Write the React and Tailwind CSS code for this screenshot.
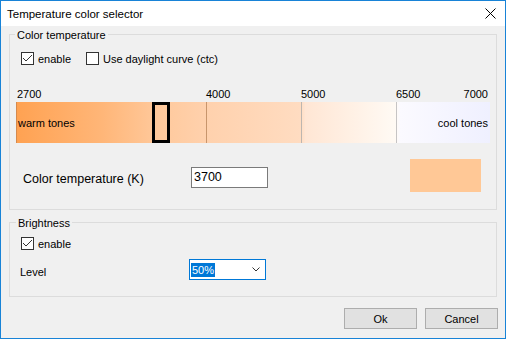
import React from 'react';

// tick labels above the scale, px from the left edge of the bar
const ticks = [
  { label: '2700', left: 1 },
  { label: '4000', left: 190 },
  { label: '5000', left: 285 },
  { label: '6500', left: 380 },
];

// separator lines inside the bar
const dividers = [
  { left: 189, color: 'bg-[#c8956c]' },
  { left: 284, color: 'bg-[#bdb6b0]' },
  { left: 379, color: 'bg-[#c6c4c4]' },
];

const Checkbox = ({ checked }) => (
  <span className="flex h-[13px] w-[13px] shrink-0 items-center justify-center border border-[#333333] bg-white">
    {checked && (
      <svg width="11" height="11" viewBox="0 0 11 11">
        <polyline points="1,5 4,8 10,2" fill="none" stroke="#333333" strokeWidth="1" />
      </svg>
    )}
  </span>
);

const GroupBox = ({ title, labelLeft, className = '', children }) => (
  <div className={`relative mx-[8px] border border-[#dcdcdc] ${className}`}>
    <span
      className="absolute -top-[7px] bg-[#f0f0f0] px-[2px] leading-[14px]"
      style={{ left: labelLeft }}
    >
      {title}
    </span>
    {children}
  </div>
);

const Button = ({ children }) => (
  <button className="flex h-[21px] w-[73px] items-center justify-center border border-[#adadad] bg-[#e1e1e1] leading-[14px] text-black">
    {children}
  </button>
);

export default function App() {
  return (
    <div className="flex h-[339px] w-[506px] flex-col border border-[#1883d7] bg-[#f0f0f0] font-['Liberation_Sans',Arial,sans-serif] text-[11px] leading-[14px] text-black">
      {/* title bar */}
      <div className="flex h-[25px] shrink-0 items-center justify-between bg-white pl-[6px]">
        <span className="text-[11.5px]">Temperature color selector</span>
        <svg width="11" height="11" viewBox="0 0 11 11" className="mr-[9px]">
          <path d="M0.5 0.5 L10.5 10.5 M10.5 0.5 L0.5 10.5" stroke="#000" strokeWidth="1" />
        </svg>
      </div>

      {/* color temperature group */}
      <GroupBox title="Color temperature" labelLeft={5} className="mt-[8px] h-[176px]">
        <div className="ml-[11px] mt-[17px] flex h-[13px] items-center">
          <label className="flex w-[65px] items-center gap-[4px]">
            <Checkbox checked />
            <span>enable</span>
          </label>
          <label className="flex items-center gap-[4px]">
            <Checkbox />
            <span>Use daylight curve (ctc)</span>
          </label>
        </div>

        <div className="relative ml-[6px] mt-[22px] h-[14px] w-[474px]">
          {ticks.map((t) => (
            <span key={t.label} className="absolute top-0" style={{ left: t.left }}>
              {t.label}
            </span>
          ))}
          <span className="absolute right-[2px] top-0">7000</span>
        </div>

        <div className="relative ml-[6px] mt-[1px] flex h-[41px] w-[474px] items-center justify-between border-l border-[#d58a4e] bg-[linear-gradient(to_right,#ffa252_0%,#ffb678_18%,#ffc99c_30%,#ffd1ad_40%,#ffdcc1_60%,#ffe6d4_61%,#fffaf4_80%,#fbfaff_81%,#eff0ff_100%)] px-[1px]">
          {dividers.map((d) => (
            <span
              key={d.left}
              className={`absolute top-0 h-full w-[1px] ${d.color}`}
              style={{ left: d.left }}
            />
          ))}
          <span className="relative">warm tones</span>
          <span className="relative pr-[1px]">cool tones</span>
          <span className="absolute left-[135px] top-0 h-[41px] w-[18px] border-[3px] border-black" />
        </div>

        <div className="mt-[16px] flex h-[33px] items-start">
          <span className="ml-[13px] mt-[13px] w-[168px] text-[12.5px]">Color temperature (K)</span>
          <div className="mt-[8px] flex h-[21px] w-[77px] items-center border border-[#7a7a7a] bg-white pb-[2px] pl-[2px] text-[12.5px]">
            3700
          </div>
          <div className="ml-auto mr-[15px] h-[33px] w-[71px] bg-[#ffc896]" />
        </div>
      </GroupBox>

      {/* brightness group */}
      <GroupBox title="Brightness" labelLeft={6} className="mt-[12px] h-[75px]">
        <label className="ml-[11px] mt-[14px] flex h-[13px] items-center gap-[4px]">
          <Checkbox checked />
          <span>enable</span>
        </label>
        <div className="mt-[9px] flex h-[21px] items-start">
          <span className="ml-[10px] mt-[6px] w-[169px]">Level</span>
          <div className="flex h-[21px] w-[77px] items-center justify-between border border-[#0078d7] bg-white pl-[1px] pr-[5px]">
            <span className="bg-[#0078d7] px-[1px] text-white">50%</span>
            <svg width="8" height="5" viewBox="0 0 8 5">
              <polyline points="0.5,0.5 4,4 7.5,0.5" fill="none" stroke="#333333" strokeWidth="1" />
            </svg>
          </div>
        </div>
      </GroupBox>

      {/* dialog buttons */}
      <div className="mt-[11px] flex justify-end gap-[8px] pr-[7px]">
        <Button>Ok</Button>
        <Button>Cancel</Button>
      </div>
    </div>
  );
}
